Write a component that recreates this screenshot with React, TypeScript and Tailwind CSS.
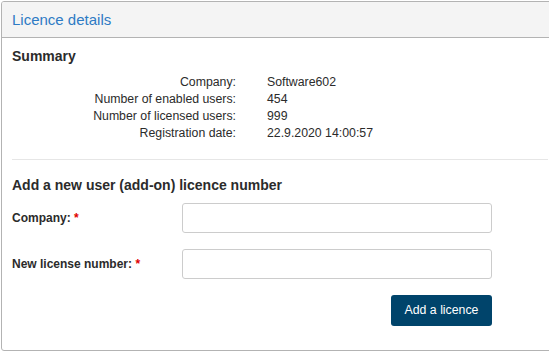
import { Fragment } from "react";

export default function App() {
  const rows = [
    ["Company:", "Software602"],
    ["Number of enabled users:", "454"],
    ["Number of licensed users:", "999"],
    ["Registration date:", "22.9.2020 14:00:57"],
  ];
  return (
    <div
      className="w-[549px] h-[352px] overflow-hidden bg-white pt-px pl-px text-[#2b2b2b]"
      style={{ fontFamily: '"Liberation Sans", Arial, sans-serif' }}
    >
      <div className="w-[560px] h-[350px] border border-[#b3b3b3] rounded-[3px] overflow-hidden">
        <div className="h-[36px] bg-[#f4f4f4] border-b border-[#b3b3b3] px-[10px] flex items-center">
          <span className="text-[15px] text-[#2e7bc4] leading-none">Licence details</span>
        </div>
        <div className="pl-[10px] pr-[12px]">
          <div className="mt-[9px] text-[14px] font-bold leading-[18px]">Summary</div>
          <div className="mt-[9px] grid grid-cols-[224px_1fr] gap-x-[31px] text-[12.3px] leading-[17px]">
            {rows.map(([k, v]) => (
              <Fragment key={k}>
                <div className="text-right">{k}</div>
                <div>{v}</div>
              </Fragment>
            ))}
          </div>
          <div className="mt-[17px] h-px bg-[#e6e6e6]" />
          <div className="mt-[16px] text-[14px] font-bold leading-[18px]">
            Add a new user (add-on) licence number
          </div>
          <div className="mt-[9px] flex flex-col gap-[16px] w-[480px]">
            <div className="flex items-center">
              <label className="w-[170px] text-[12px] font-bold">
                Company: <span className="text-[#e00000]">*</span>
              </label>
              <input className="w-[310px] h-[30px] border border-[#cccccc] rounded-[3px] outline-none" />
            </div>
            <div className="flex items-center">
              <label className="w-[170px] text-[12px] font-bold">
                New license number: <span className="text-[#e00000]">*</span>
              </label>
              <input className="w-[310px] h-[30px] border border-[#cccccc] rounded-[3px] outline-none" />
            </div>
            <div className="flex justify-end">
              <button className="w-[101px] h-[31px] rounded-[3px] bg-[#00446b] text-white text-[12.3px]">
                Add a licence
              </button>
            </div>
          </div>
        </div>
      </div>
    </div>
  );
}
